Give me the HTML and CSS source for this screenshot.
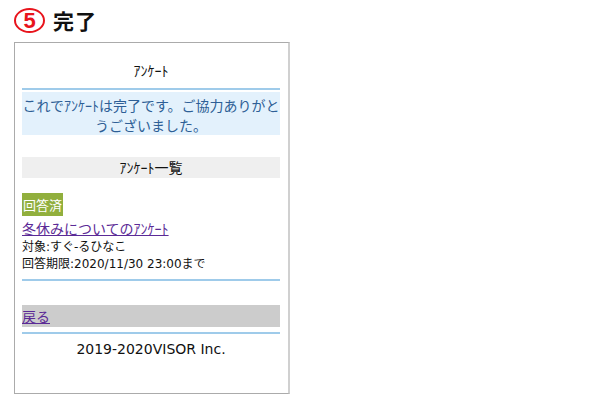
FILE: index.html
```html
<!DOCTYPE html>
<html lang="ja">
<head>
<meta charset="utf-8">
<link rel="stylesheet" href="styles.css">
</head>
<body>
<div class="title">
  <span class="circle">5</span>
  <span class="title-text">完了</span>
</div>
<div class="frame">
  <div class="header">ｱﾝｹｰﾄ</div>
  <div class="rule"></div>
  <div class="message">これでｱﾝｹｰﾄは完了です。ご協力ありがとうございました。</div>
  <div class="section">ｱﾝｹｰﾄ一覧</div>
  <div class="badge">回答済</div>
  <a class="item-link" href="#">冬休みについてのｱﾝｹｰﾄ</a>
  <div class="meta">対象:すぐ-るひなこ</div>
  <div class="meta">回答期限:2020/11/30 23:00まで</div>
  <div class="rule rule-after"></div>
  <div class="back"><a href="#">戻る</a></div>
  <div class="rule rule-footer"></div>
  <div class="footer">2019-2020VISOR Inc.</div>
</div>
</body>
</html>
```
FILE: styles.css
```css
html, body {
  margin: 0;
  padding: 0;
  background: #fff;
}
body {
  font-family: "DejaVu Sans", "Noto Sans CJK JP", sans-serif;
  color: #111;
}
.title {
  display: flex;
  align-items: center;
  height: 42px;
  padding-left: 14px;
  box-sizing: border-box;
  padding-bottom: 1px;
}
.circle {
  box-sizing: border-box;
  width: 31px;
  height: 25px;
  border: 2px solid #e8141c;
  border-radius: 50%;
  color: #e8141c;
  font-family: "Liberation Sans", sans-serif;
  font-weight: bold;
  font-size: 22px;
  line-height: 21px;
  text-align: center;
}
.title-text {
  margin-left: 8px;
  font-family: "Noto Sans CJK JP", sans-serif;
  font-weight: bold;
  font-size: 21px;
  line-height: 25px;
  letter-spacing: 1px;
  color: #111;
}
.frame {
  box-sizing: border-box;
  width: 276px;
  height: 352px;
  margin-left: 14px;
  border: 1px solid #ababab;
  border-right: 2px solid #d0d0d0;
  padding: 0 8px 0 7px;
}
.header {
  text-align: center;
  font-size: 14px;
  line-height: 18px;
  padding-top: 18px;
  padding-bottom: 9px;
  font-family: "Noto Sans CJK JP", sans-serif;
}
.rule {
  height: 2px;
  background: #9fcbea;
}
.message {
  margin-top: 2px;
  background: #e3f1fc;
  color: #2e5f96;
  text-align: center;
  font-family: "Noto Sans CJK JP", sans-serif;
  font-size: 14px;
  line-height: 20px;
  padding-top: 3px;
}
.section {
  margin-top: 22px;
  background: #efefef;
  text-align: center;
  font-family: "Noto Sans CJK JP", sans-serif;
  font-size: 14px;
  line-height: 21px;
  height: 21px;
}
.badge {
  margin-top: 15px;
  width: 41px;
  height: 23px;
  background: #91af3d;
  color: #fff;
  font-family: "Noto Sans CJK JP", sans-serif;
  font-size: 13px;
  line-height: 23px;
  text-align: center;
}
.item-link {
  display: block;
  margin-top: 1px;
  font-family: "Noto Sans CJK JP", sans-serif;
  font-size: 14px;
  line-height: 22px;
  color: #5b2a96;
  text-decoration: underline;
}
.meta {
  font-size: 12px;
  line-height: 17px;
}
.rule-after {
  margin-top: 6px;
}
.back {
  margin-top: 24px;
  height: 22px;
  background: #cccccc;
  font-family: "Noto Sans CJK JP", sans-serif;
  font-size: 14px;
  line-height: 22px;
}
.back a {
  color: #5b2a96;
  text-decoration: underline;
}
.rule-footer {
  margin-top: 5px;
}
.footer {
  margin-top: 5px;
  text-align: center;
  font-size: 14px;
  line-height: 20px;
  color: #111;
}
```
